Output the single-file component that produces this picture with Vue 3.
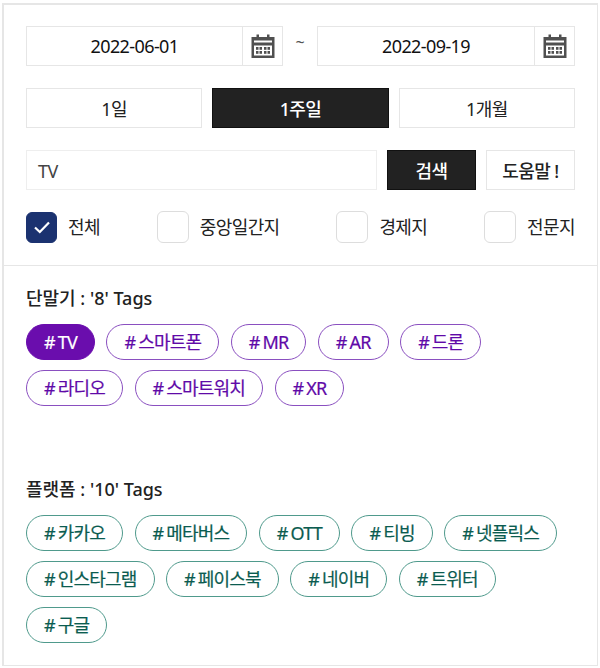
<script setup>
const periods = [
  { label: '1일', on: false },
  { label: '1주일', on: true },
  { label: '1개월', on: false },
]
const checks = [
  { label: '전체', on: true },
  { label: '중앙일간지', on: false },
  { label: '경제지', on: false },
  { label: '전문지', on: false },
]
const devices = ['스마트폰', 'MR', 'AR', '드론', '라디오', '스마트워치', 'XR']
const platforms = ['카카오', '메타버스', 'OTT', '티빙', '넷플릭스', '인스타그램', '페이스북', '네이버', '트위터', '구글']
const dates = ['2022-06-01', '2022-09-19']
</script>

<template>
  <div class="page">
    <div class="panel">
      <section class="filters">
        <div class="date-row">
          <template v-for="(d, i) in dates" :key="d">
            <span v-if="i === 1" class="tilde">~</span>
            <div class="date">
              <span class="date-text">{{ d }}</span>
              <span class="date-icon">
                <svg width="24" height="24" viewBox="0 0 24 24">
                  <path fill="#505050" d="M0.500 3h5V0.500h2.500V3h8V0.500h2.500V3h5v21H0.500z" />
                  <rect x="3" y="6.500" width="18" height="2" fill="#fff" />
                  <rect x="3" y="11.500" width="18" height="10" fill="#fff" />
                  <g fill="#505050">
                    <rect x="5" y="13" width="2.500" height="2.800" />
                    <rect x="8.500" y="13" width="2.500" height="2.800" />
                    <rect x="13" y="13" width="2.500" height="2.800" />
                    <rect x="16.500" y="13" width="2.500" height="2.800" />
                    <rect x="5" y="17" width="2.500" height="2.800" />
                    <rect x="8.500" y="17" width="2.500" height="2.800" />
                    <rect x="13" y="17" width="2.500" height="2.800" />
                    <rect x="16.500" y="17" width="2.500" height="2.800" />
                  </g>
                </svg>
              </span>
            </div>
          </template>
        </div>

        <div class="period-row">
          <button v-for="p in periods" :key="p.label" class="btn period" :class="{ dark: p.on }">{{ p.label }}</button>
        </div>

        <div class="search-row">
          <div class="search-input">TV</div>
          <button class="btn dark action">검색</button>
          <button class="btn action help">도움말 !</button>
        </div>

        <div class="check-row">
          <label v-for="c in checks" :key="c.label" class="check">
            <span class="box" :class="{ on: c.on }">
              <svg v-if="c.on" width="18" height="14" viewBox="0 0 18 14">
                <path d="M2 7.500l4.800 4.500L16 2.500" fill="none" stroke="#fff" stroke-width="2.200" />
              </svg>
            </span>
            <span class="check-label">{{ c.label }}</span>
          </label>
        </div>
      </section>

      <section class="tags-area">
        <div class="group devices">
          <h3 class="title">단말기 : '8' Tags</h3>
          <div class="tags">
            <span class="tag purple solid"># TV</span>
            <span v-for="t in devices" :key="t" class="tag purple"># {{ t }}</span>
          </div>
        </div>
        <div class="group platforms">
          <h3 class="title">플랫폼 : '10' Tags</h3>
          <div class="tags">
            <span v-for="t in platforms" :key="t" class="tag green"># {{ t }}</span>
          </div>
        </div>
      </section>
    </div>
  </div>
</template>

<style scoped>
.page {
  width: 600px;
  height: 668px;
  padding: 3px 2px 2px 2px;
  box-sizing: border-box;
  background: #fff;
  font-family: "Noto Sans", "Noto Sans CJK KR", sans-serif;
  color: #222;
}
.panel {
  width: 596px;
  height: 663px;
  box-sizing: border-box;
  border: 2px solid #e6e6e6;
  border-width: 2px 1px 1px 2px;
}
.filters {
  height: 261px;
  box-sizing: border-box;
  padding: 21px 22px 0 22px;
  border-bottom: 1px solid #e6e6e6;
}
.date-row {
  display: flex;
  align-items: center;
  height: 40px;
}
.date {
  display: flex;
  width: 257px;
  height: 40px;
  box-sizing: border-box;
  border: 1px solid #e6e6e6;
}
.tilde + .date {
  width: 258px;
}
.date-text {
  flex: 1;
  text-align: center;
  font-size: 18px;
  line-height: 38px;
  letter-spacing: -0.6px;
  color: #111;
}
.date-icon {
  width: 40px;
  box-sizing: border-box;
  border-left: 1px solid #e6e6e6;
  display: flex;
  align-items: center;
  justify-content: center;
}
.tilde {
  width: 34px;
  text-align: center;
  font-size: 16px;
  line-height: 20px;
  padding-bottom: 8px;
  color: #555;
}
.period-row {
  display: flex;
  gap: 10px;
  margin-top: 22px;
}
.btn {
  height: 40px;
  box-sizing: border-box;
  border: 1px solid #e6e6e6;
  background: #fff;
  color: #222;
  font-family: inherit;
  font-size: 18px;
  letter-spacing: -0.6px;
  padding: 0;
}
.period {
  flex: 1;
}
.btn.dark {
  background: #222;
  border-color: #111;
  color: #fff;
  font-weight: 500;
}
.search-row {
  display: flex;
  gap: 10px;
  margin-top: 22px;
}
.search-input {
  flex: 1;
  height: 40px;
  box-sizing: border-box;
  border: 1px solid #eee;
  padding-left: 11px;
  font-size: 18px;
  line-height: 40px;
  letter-spacing: -0.6px;
  color: #444;
}
.action {
  width: 89px;
}
.help {
  font-weight: 500;
}
.check-row {
  display: flex;
  justify-content: space-between;
  margin-top: 21px;
}
.check {
  display: flex;
  align-items: center;
  gap: 11px;
}
.box {
  width: 32px;
  height: 32px;
  box-sizing: border-box;
  border: 1px solid #ddd;
  border-radius: 6px;
  display: flex;
  align-items: center;
  justify-content: center;
}
.box.on {
  width: 31px;
  height: 31px;
  background: #1b3270;
  border-color: #1b3270;
}
.check-label {
  font-size: 18px;
  letter-spacing: -0.6px;
  line-height: 31px;
}
.tags-area {
  padding: 0 22px;
}
.group.devices {
  height: 210px;
  padding-top: 19px;
  box-sizing: border-box;
}
.title {
  margin: 0;
  font-size: 18px;
  font-weight: 500;
  line-height: 26px;
  letter-spacing: 0;
  color: #222;
}
.tags {
  display: flex;
  flex-wrap: wrap;
  gap: 10px 11.5px;
  margin-top: 13px;
}
.tag {
  height: 36px;
  box-sizing: border-box;
  padding: 0 17px;
  border-radius: 18px;
  border: 1px solid;
  font-size: 18px;
  line-height: 34px;
  letter-spacing: -0.8px;
  word-spacing: -1px;
  background: #fff;
  -webkit-text-stroke: 0.2px currentColor;
}
.purple {
  border-color: #8a4fc0;
  color: #5f0aa8;
}
.purple.solid {
  background: #6a0dad;
  border-color: #6a0dad;
  color: #fff;
}
.green {
  border-color: #4f9a8c;
  color: #0b5c50;
}
</style>
